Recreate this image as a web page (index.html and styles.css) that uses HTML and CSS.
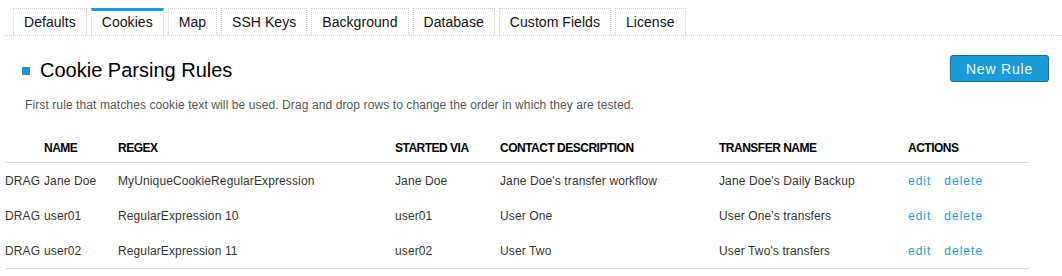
FILE: index.html
```html
<!DOCTYPE html>
<html>
<head>
<meta charset="utf-8">
<title>Cookie Parsing Rules</title>
<link rel="stylesheet" href="styles.css">
</head>
<body>
<div class="page">
  <ul class="tabs">
    <li class="tab">Defaults</li>
    <li class="tab active">Cookies</li>
    <li class="tab">Map</li>
    <li class="tab">SSH Keys</li>
    <li class="tab">Background</li>
    <li class="tab">Database</li>
    <li class="tab">Custom Fields</li>
    <li class="tab">License</li>
  </ul>

  <div class="header">
    <h1 class="title"><span class="bullet"></span>Cookie Parsing Rules</h1>
    <button class="btn-primary">New Rule</button>
  </div>

  <p class="desc">First rule that matches cookie text will be used. Drag and drop rows to change the order in which they are tested.</p>

  <table class="rules">
    <colgroup>
      <col class="c-drag"><col class="c-name"><col class="c-regex"><col class="c-via"><col class="c-contact"><col class="c-transfer"><col class="c-actions">
    </colgroup>
    <thead>
      <tr>
        <th></th><th>NAME</th><th>REGEX</th><th>STARTED VIA</th><th>CONTACT DESCRIPTION</th><th>TRANSFER NAME</th><th>ACTIONS</th>
      </tr>
    </thead>
    <tbody>
      <tr>
        <td class="drag">DRAG</td><td>Jane Doe</td><td>MyUniqueCookieRegularExpression</td><td>Jane Doe</td><td>Jane Doe's transfer workflow</td><td>Jane Doe's Daily Backup</td>
        <td><a class="act" href="#">edit</a><a class="act" href="#">delete</a></td>
      </tr>
      <tr>
        <td class="drag">DRAG</td><td>user01</td><td>RegularExpression 10</td><td>user01</td><td>User One</td><td>User One's transfers</td>
        <td><a class="act" href="#">edit</a><a class="act" href="#">delete</a></td>
      </tr>
      <tr>
        <td class="drag">DRAG</td><td>user02</td><td>RegularExpression 11</td><td>user02</td><td>User Two</td><td>User Two's transfers</td>
        <td><a class="act" href="#">edit</a><a class="act" href="#">delete</a></td>
      </tr>
    </tbody>
  </table>
</div>
</body>
</html>
```

FILE: styles.css
```css
html, body {
  margin: 0;
  padding: 0;
  background: #fff;
}

body {
  font-family: "Liberation Sans", Arial, sans-serif;
  color: #333;
}

.page {
  padding-top: 8px;
}

.tabs {
  list-style: none;
  margin: 0 0 0 5px;
  padding: 0 0 0 8px;
  display: flex;
  align-items: flex-end;
  gap: 4px;
  border-bottom: 1px dotted #cfcfcf;
}

.tab {
  font-size: 14px;
  line-height: 17px;
  color: #111;
  padding: 5px 10px 4px;
  border: 1px dotted #cdcdcd;
  border-bottom: none;
  background: #fff;
  letter-spacing: 0.05px;
}

.tab.active {
  border-top: 3px solid #1a9bd7;
  padding-top: 3px;
}

.header {
  display: flex;
  justify-content: space-between;
  align-items: center;
  margin: 19px 13px 0 22px;
}

.title {
  display: flex;
  align-items: center;
  margin: 4px 0 0 0;
  font-size: 20px;
  font-weight: normal;
  line-height: 23px;
  color: #000;
}

.bullet {
  width: 8px;
  height: 8px;
  background: #2a8fd8;
  margin-right: 10px;
}

.btn-primary {
  box-sizing: border-box;
  height: 27px;
  width: 99px;
  padding: 0;
  font-family: "Liberation Sans", Arial, sans-serif;
  font-size: 14px;
  letter-spacing: 0.8px;
  color: #eef7fc;
  background: #1a9bd7;
  border: 1px solid #1d6a8c;
  border-radius: 3px;
}

.desc {
  margin: 16px 0 0 25px;
  font-size: 12px;
  line-height: 15px;
  letter-spacing: 0.1px;
  color: #555;
}

.rules {
  margin: 20px 0 0 5px;
  width: 1024px;
  table-layout: fixed;
  border-collapse: collapse;
  font-size: 12px;
}

.c-drag { width: 39px; }
.c-name { width: 74px; }
.c-regex { width: 277px; }
.c-via { width: 105px; }
.c-contact { width: 219px; }
.c-transfer { width: 189px; }
.c-actions { width: 121px; }

.rules th {
  height: 29px;
  padding: 0;
  text-align: left;
  font-weight: bold;
  letter-spacing: -0.5px;
  color: #000;
  border-bottom: 1px solid #dcd9dc;
  vertical-align: middle;
}

.rules td {
  height: 35px;
  padding: 0;
  color: #333;
  letter-spacing: 0.12px;
  vertical-align: middle;
  white-space: nowrap;
}

.rules tbody tr:last-child td {
  border-bottom: 1px solid #dcd9dc;
}

.act {
  color: #1e9ad6;
  text-decoration: none;
  letter-spacing: 1px;
  margin-right: 13px;
}
```
